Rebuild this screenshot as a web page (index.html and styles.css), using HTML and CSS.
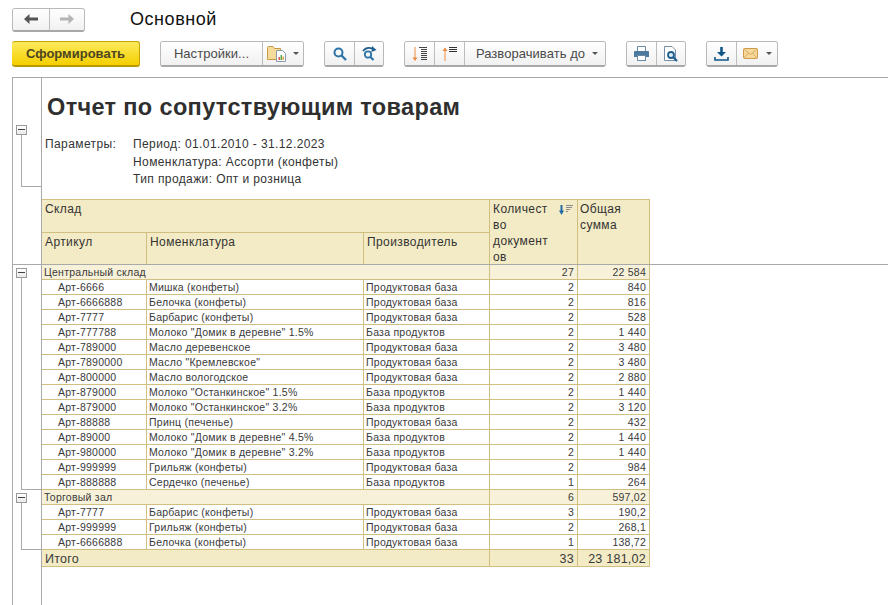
FILE: index.html
```html
<!DOCTYPE html>
<html lang="ru">
  <head>
    <meta charset="UTF-8" />
    <meta name="viewport" content="width=device-width, initial-scale=1.0" />
    <title>Основной</title>
    <link rel="stylesheet" href="styles.css">
  </head>
  <body>
    <div class="page">
      <header class="topbar">
        <div class="btn-group nav">
          <button class="btn nav-btn">
            <svg width="14" height="10" viewBox="0 0 14 10"><path d="M5.5 0 L0 5 L5.5 10 V6.5 H14 V3.5 H5.5 Z" fill="#555"/></svg>
          </button>
          <button class="btn nav-btn">
            <svg width="14" height="10" viewBox="0 0 14 10"><path d="M8.5 0 L14 5 L8.5 10 V6.5 H0 V3.5 H8.5 Z" fill="#b4b4b4"/></svg>
          </button>
        </div>
        <h1 class="page-title">Основной</h1>
      </header>

      <div class="toolbar">
        <button class="btn btn-primary">Сформировать</button>

        <div class="btn-group">
          <button class="btn btn-text settings">Настройки...</button>
          <button class="btn btn-icon settings-menu">
            <svg width="20" height="17" viewBox="0 0 20 17">
              <path d="M.5 14.5 V2.5 Q.5 1.5 1.5 1.5 H6 L7.5 3.5 H13.5 V14.5 Z" fill="#f6dc9a" stroke="#c79a45"/>
              <path d="M9.5 5.5 H15.5 L18.5 8.5 V16.5 H9.5 Z" fill="#fff" stroke="#8a9aa8"/>
              <rect x="11.5" y="12" width="1.5" height="3" fill="#d9534f"/>
              <rect x="13.5" y="10" width="1.5" height="5" fill="#5aa64a"/>
              <rect x="15.5" y="11.5" width="1.5" height="3.5" fill="#d9a13f"/>
            </svg>
            <span class="caret"></span>
          </button>
        </div>

        <div class="btn-group">
          <button class="btn btn-square">
            <svg width="14" height="14" viewBox="0 0 14 14"><circle cx="5.5" cy="5.5" r="4" fill="none" stroke="#2d74a8" stroke-width="2"/><path d="M8.5 8.5 L13 13" stroke="#2d74a8" stroke-width="2.4"/></svg>
          </button>
          <button class="btn btn-square">
            <svg width="15" height="15" viewBox="0 0 15 15"><circle cx="6" cy="8.5" r="3.2" fill="none" stroke="#2d74a8" stroke-width="1.8"/><path d="M8.5 11 L11.5 14" stroke="#2d74a8" stroke-width="2.2"/><path d="M1 5 Q5 0 11 3" fill="none" stroke="#1f5f8f" stroke-width="1.8"/><path d="M10 0 L14.5 4 L9.5 6 Z" fill="#1f5f8f"/></svg>
          </button>
        </div>

        <div class="btn-group">
          <button class="btn btn-square">
            <svg width="16" height="16" viewBox="0 0 16 16">
              <path d="M3 1 V13" stroke="#ee8a3c" stroke-width="1"/><path d="M.5 11.5 H5.5 L3 15 Z" fill="#ee8a3c"/>
              <path d="M7 1.5 H15 M9 3.5 H15 M9 5.5 H15 M9 7.5 H15 M9 9.5 H15 M9 11.5 H15 M9 13.5 H15" stroke="#444" stroke-width="1"/>
            </svg>
          </button>
          <button class="btn btn-square btn-square-wide">
            <svg width="16" height="16" viewBox="0 0 16 16">
              <path d="M3 15 V4" stroke="#ee8a3c" stroke-width="1"/><path d="M.5 5 H5.5 L3 1.5 Z" fill="#ee8a3c"/>
              <path d="M7 1.5 H15 M7 3.5 H15 M7 5.5 H15" stroke="#333" stroke-width="1"/>
            </svg>
          </button>
          <button class="btn btn-text expand">Разворачивать до<span class="caret"></span></button>
        </div>

        <div class="btn-group">
          <button class="btn btn-square">
            <svg width="15" height="15" viewBox="0 0 15 15">
              <path d="M3.5 5 V.5 H11.5 V5" fill="#fff" stroke="#6a8ba6"/>
              <path d="M1 5 H14 Q15 5 15 6 V11 H12 V9 H3 V11 H0 V6 Q0 5 1 5 Z" fill="#4c7a9e"/>
              <rect x="3.5" y="9.5" width="8" height="5" fill="#fff" stroke="#6a8ba6"/>
            </svg>
          </button>
          <button class="btn btn-square">
            <svg width="15" height="16" viewBox="0 0 15 16">
              <path d="M.5 .5 H8 L11.5 4 V14.5 H.5 Z" fill="#fff" stroke="#7890a5"/>
              <circle cx="7" cy="9" r="3" fill="#dceaf3" stroke="#1f5f8f" stroke-width="1.8"/>
              <path d="M9.2 11.2 L13 15" stroke="#1f5f8f" stroke-width="2.2"/>
            </svg>
          </button>
        </div>

        <div class="btn-group">
          <button class="btn btn-square">
            <svg width="15" height="14" viewBox="0 0 15 14"><path d="M6.2 0 H8.8 V5 H12 L7.5 9.5 L3 5 H6.2 Z" fill="#0f5688"/><path d="M1 10 V13 H14 V10" fill="none" stroke="#0f5688" stroke-width="1.6"/></svg>
          </button>
          <button class="btn btn-icon mail">
            <svg width="15" height="11" viewBox="0 0 15 11"><rect x=".5" y=".5" width="14" height="10" rx="1" fill="#f6d99a" stroke="#cf9a48"/><path d="M1 1 L7.5 6.5 L14 1 M1 10 L5.5 5 M14 10 L9.5 5" fill="none" stroke="#d9a85c"/></svg>
            <span class="caret"></span>
          </button>
        </div>
      </div>

      <main class="report">
        <section class="band band-params">
          <div class="gutter gutter-params">
            <span class="toggle"></span>
            <span class="bracket"></span>
          </div>
          <div class="band-body">
            <h2 class="report-title">Отчет по сопутствующим товарам</h2>
            <div class="params">
              <div class="params-label">Параметры:</div>
              <div>
                <div>Период: 01.01.2010 - 31.12.2023</div>
                <div>Номенклатура: Ассорти (конфеты)</div>
                <div>Тип продажи: Опт и розница</div>
              </div>
            </div>
          </div>
        </section>

        <section class="band band-head">
          <div class="gutter"></div>
          <table class="grid grid-head">
            <colgroup><col class="c-art"><col class="c-nom"><col class="c-prod"><col class="c-qty"><col class="c-sum"></colgroup>
            <tr class="head-top">
              <th colspan="3">Склад</th>
              <th rowspan="2">
                <div class="qty-head">
                  <span class="qty-name">Количество документов</span>
                  <svg class="sort-icon" width="14" height="10" viewBox="0 0 14 10"><path d="M2.5 0 V7" stroke="#1f6aa5" stroke-width="2"/><path d="M0 5.5 H5 L2.5 10 Z" fill="#1f6aa5"/><path d="M7 .5 H14 M7 2.5 H13 M7 4.5 H11 M7 6.5 H9" stroke="#8a8a8a" stroke-width="1"/></svg>
                </div>
              </th>
              <th rowspan="2" class="sum-head">Общая сумма</th>
            </tr>
            <tr>
              <th>Артикул</th>
              <th>Номенклатура</th>
              <th>Производитель</th>
            </tr>
          </table>
        </section>

        <section class="band band-group">
          <div class="gutter gutter-group">
            <span class="toggle"></span>
            <span class="bracket"></span>
          </div>
          <table class="grid">
            <colgroup><col class="c-art"><col class="c-nom"><col class="c-prod"><col class="c-qty"><col class="c-sum"></colgroup>
            <tr class="group"><td colspan="3">Центральный склад</td><td class="num">27</td><td class="num">22 584</td></tr>
            <tr><td class="art">Арт-6666</td><td>Мишка (конфеты)</td><td>Продуктовая база</td><td class="num">2</td><td class="num">840</td></tr>
            <tr><td class="art">Арт-6666888</td><td>Белочка (конфеты)</td><td>Продуктовая база</td><td class="num">2</td><td class="num">816</td></tr>
            <tr><td class="art">Арт-7777</td><td>Барбарис (конфеты)</td><td>Продуктовая база</td><td class="num">2</td><td class="num">528</td></tr>
            <tr><td class="art">Арт-777788</td><td>Молоко "Домик в деревне" 1.5%</td><td>База продуктов</td><td class="num">2</td><td class="num">1 440</td></tr>
            <tr><td class="art">Арт-789000</td><td>Масло деревенское</td><td>Продуктовая база</td><td class="num">2</td><td class="num">3 480</td></tr>
            <tr><td class="art">Арт-7890000</td><td>Масло "Кремлевское"</td><td>Продуктовая база</td><td class="num">2</td><td class="num">3 480</td></tr>
            <tr><td class="art">Арт-800000</td><td>Масло вологодское</td><td>Продуктовая база</td><td class="num">2</td><td class="num">2 880</td></tr>
            <tr><td class="art">Арт-879000</td><td>Молоко "Останкинское" 1.5%</td><td>База продуктов</td><td class="num">2</td><td class="num">1 440</td></tr>
            <tr><td class="art">Арт-879000</td><td>Молоко "Останкинское" 3.2%</td><td>База продуктов</td><td class="num">2</td><td class="num">3 120</td></tr>
            <tr><td class="art">Арт-88888</td><td>Принц (печенье)</td><td>Продуктовая база</td><td class="num">2</td><td class="num">432</td></tr>
            <tr><td class="art">Арт-89000</td><td>Молоко "Домик в деревне" 4.5%</td><td>База продуктов</td><td class="num">2</td><td class="num">1 440</td></tr>
            <tr><td class="art">Арт-980000</td><td>Молоко "Домик в деревне" 3.2%</td><td>База продуктов</td><td class="num">2</td><td class="num">1 440</td></tr>
            <tr><td class="art">Арт-999999</td><td>Грильяж (конфеты)</td><td>Продуктовая база</td><td class="num">2</td><td class="num">984</td></tr>
            <tr><td class="art">Арт-888888</td><td>Сердечко (печенье)</td><td>База продуктов</td><td class="num">1</td><td class="num">264</td></tr>
          </table>
        </section>

        <section class="band band-group">
          <div class="gutter gutter-group">
            <span class="toggle"></span>
            <span class="bracket"></span>
          </div>
          <table class="grid">
            <colgroup><col class="c-art"><col class="c-nom"><col class="c-prod"><col class="c-qty"><col class="c-sum"></colgroup>
            <tr class="group"><td colspan="3">Торговый зал</td><td class="num">6</td><td class="num">597,02</td></tr>
            <tr><td class="art">Арт-7777</td><td>Барбарис (конфеты)</td><td>Продуктовая база</td><td class="num">3</td><td class="num">190,2</td></tr>
            <tr><td class="art">Арт-999999</td><td>Грильяж (конфеты)</td><td>Продуктовая база</td><td class="num">2</td><td class="num">268,1</td></tr>
            <tr><td class="art">Арт-6666888</td><td>Белочка (конфеты)</td><td>Продуктовая база</td><td class="num">1</td><td class="num">138,72</td></tr>
          </table>
        </section>

        <section class="band band-total">
          <div class="gutter"></div>
          <table class="grid">
            <colgroup><col class="c-art"><col class="c-nom"><col class="c-prod"><col class="c-qty"><col class="c-sum"></colgroup>
            <tr class="total"><td colspan="3">Итого</td><td class="num">33</td><td class="num">23 181,02</td></tr>
          </table>
        </section>

        <section class="band band-rest">
          <div class="gutter"></div>
        </section>
      </main>
    </div>
  </body>
</html>
```

FILE: styles.css
```css
* {
  box-sizing: border-box;
}
html, body {
  margin: 0;
  height: 100%;
  overflow: hidden;
}
body {
  font-family: "Liberation Sans", Arial, sans-serif;
  color: #333;
  background: #fff;
}
.page {
  display: flex;
  flex-direction: column;
  height: 605px;
}

/* top */
.topbar {
  display: flex;
  align-items: center;
  gap: 45px;
  height: 41px;
  padding: 0 0 2px 12px;
}
.page-title {
  margin: 0;
  font-size: 18px;
  font-weight: normal;
  letter-spacing: 0.55px;
  color: #111;
}
.toolbar {
  display: flex;
  gap: 20px;
  height: 36px;
  padding-left: 12px;
  align-items: flex-start;
}

/* buttons */
.btn-group {
  display: flex;
  height: 26px;
  border: 1px solid #b9b9b9;
  border-bottom: 2px solid #a8a8a8;
  border-radius: 3px;
  overflow: hidden;
}
.btn {
  display: flex;
  align-items: center;
  justify-content: center;
  height: 100%;
  margin: 0;
  padding: 0;
  border: 0;
  border-left: 1px solid #bdbdbd;
  background: linear-gradient(#fff, #f1f1f1);
  font-family: inherit;
  color: #4a4a4a;
}
.btn:first-child {
  border-left: 0;
}
.nav {
  height: 24px;
  width: 73px;
}
.nav-btn {
  width: 36px;
}
.btn-primary {
  width: 128px;
  height: 26px;
  border: 1px solid #c5a400;
  border-bottom: 2px solid #b99a00;
  border-radius: 3px;
  background: linear-gradient(#fdea5c, #f4cf00);
  font-size: 13px;
  font-weight: bold;
  color: #4d4520;
}
.btn-text {
  font-size: 13px;
  letter-spacing: 0.05px;
}
.settings {
  width: 101px;
}
.settings-menu {
  width: 41px;
  gap: 6px;
}
.btn-square {
  width: 29px;
}
.btn-square-wide {
  width: 30px;
}
.expand {
  width: 141px;
  gap: 7px;
  padding-left: 4px;
}
.mail {
  width: 41px;
  gap: 8px;
}
.caret {
  width: 0;
  height: 0;
  border: 3.5px solid transparent;
  border-top: 3.5px solid #555;
  border-bottom: 0;
}

/* report */
.report {
  flex: 1;
  display: flex;
  flex-direction: column;
  margin-left: 12px;
  border-left: 1px solid #a9a9a9;
  border-top: 1px solid #a9a9a9;
}
.band {
  display: flex;
}
.band-head {
  border-bottom: 1px solid #a9a9a9;
}
.band-rest {
  flex: 1;
}
.gutter {
  flex: none;
  display: flex;
  flex-direction: column;
  width: 29px;
  padding-left: 3px;
  border-right: 1px solid #a9a9a9;
}
.gutter-params {
  padding-top: 47px;
  padding-bottom: 12px;
}
.gutter-group {
  padding-top: 3px;
  padding-bottom: 0;
}
.toggle {
  position: relative;
  flex: none;
  width: 11px;
  height: 10px;
  border: 1px solid #9a9a9a;
  background: linear-gradient(#fff, #e9e9e9);
}
.toggle::after {
  content: "";
  position: absolute;
  left: 1px;
  right: 1px;
  top: 3px;
  height: 1px;
  background: #444;
}
.bracket {
  flex: 1;
  margin-left: 5px;
  border-left: 1px solid #a9a9a9;
  border-bottom: 1px solid #a9a9a9;
}
.band-body {
  flex: 1;
  height: 121px;
  padding-left: 3px;
  font-size: 12px;
  letter-spacing: 0.4px;
}
.report-title {
  margin: 16px 0 16px 2px;
  font-size: 23.5px;
  line-height: 26px;
  font-weight: bold;
  letter-spacing: 0.35px;
  color: #2f2f2f;
}
.params {
  display: flex;
  line-height: 17.5px;
}
.params-label {
  width: 88px;
}

/* table */
.grid {
  table-layout: fixed;
  width: 608px;
  border-collapse: separate;
  border-spacing: 0;
  font-size: 10.5px;
  letter-spacing: 0.25px;
}
.c-art { width: 105px; }
.c-nom { width: 217px; }
.c-prod { width: 126px; }
.c-qty { width: 88px; }
.c-sum { width: 72px; }
.grid td, .grid th {
  border-right: 1px solid #d0bf80;
  border-bottom: 1px solid #d0bf80;
  padding: 0 3px 0 2px;
  overflow: hidden;
  white-space: nowrap;
}
.grid td {
  height: 15px;
  line-height: 14px;
  color: #3a3a3a;
}
.grid-head {
  font-size: 12px;
  letter-spacing: 0.4px;
}
.grid-head th {
  height: 31px;
  padding: 1px 3px 0 3px;
  vertical-align: top;
  text-align: left;
  font-weight: normal;
  line-height: 16px;
  white-space: normal;
  background: #f3ebc5;
  border-top: 0;
}
.grid-head tr:last-child th,
.grid-head th[rowspan] {
  border-bottom: 0;
}
.head-top th {
  height: 34px;
  border-top: 1px solid #d0bf80;
}
.grid-head .sum-head {
  padding-left: 2px;
}
.qty-head {
  display: flex;
  justify-content: space-between;
  margin-bottom: -2px;
}
.qty-name {
  width: 58px;
  overflow-wrap: anywhere;
}
.sort-icon {
  flex: none;
  margin: 4px 1px 0 0;
}
.art {
  padding-left: 16px !important;
}
.num {
  text-align: right;
}
.group td {
  background: #f7f1d9;
}
.total td {
  height: 17px;
  background: #f3ebc5;
  font-size: 12.5px;
  line-height: 14px;
  padding-top: 2px;
  padding-left: 3px;
}
```
